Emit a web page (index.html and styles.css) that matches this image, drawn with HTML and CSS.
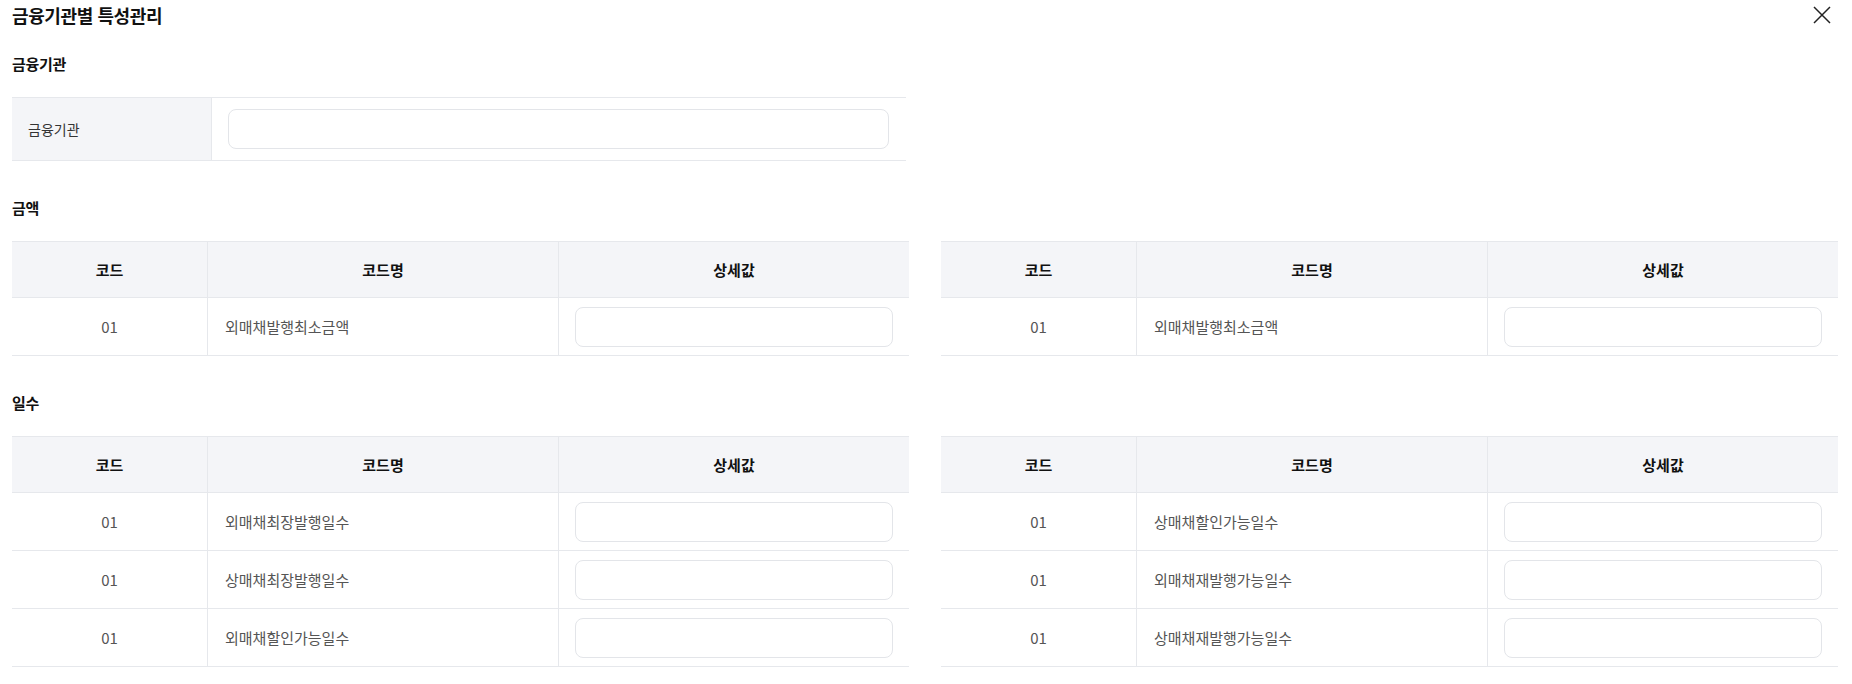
FILE: index.html
```html
<!DOCTYPE html>
<html lang="ko">
<head>
    <meta charset="UTF-8">
    <meta name="viewport" content="width=device-width, initial-scale=1.0">
    <title>금융기관별 특성관리</title>
    <link rel="stylesheet" href="styles.css">
</head>
<body>
    <div class="modal">
        <div class="modal-head">
            <h1>금융기관별 특성관리</h1>
            <button class="close-btn" type="button" aria-label="닫기">
                <svg viewBox="0 0 18 18">
                    <path d="M1 1L17 17M17 1L1 17"/>
                </svg>
            </button>
        </div>

        <!-- 금융기관 선택 -->
        <section class="group">
            <h2>금융기관</h2>
            <div class="pair">
                <div class="form-table">
                    <div class="form-row">
                        <div class="form-label">금융기관</div>
                        <div class="form-field"><input class="text-input" type="text"></div>
                    </div>
                </div>
            </div>
        </section>

        <!-- 금액 -->
        <section class="group">
            <h2>금액</h2>
            <div class="pair">
                <div class="grid-table">
                    <div class="grid-row grid-head">
                        <div class="cell">코드</div>
                        <div class="cell">코드명</div>
                        <div class="cell">상세값</div>
                    </div>
                    <div class="grid-row">
                        <div class="cell center">01</div>
                        <div class="cell name">외매채발행최소금액</div>
                        <div class="cell field"><input class="text-input" type="text"></div>
                    </div>
                </div>
                <div class="grid-table">
                    <div class="grid-row grid-head">
                        <div class="cell">코드</div>
                        <div class="cell">코드명</div>
                        <div class="cell">상세값</div>
                    </div>
                    <div class="grid-row">
                        <div class="cell center">01</div>
                        <div class="cell name">외매채발행최소금액</div>
                        <div class="cell field"><input class="text-input" type="text"></div>
                    </div>
                </div>
            </div>
        </section>

        <!-- 일수 -->
        <section class="group">
            <h2>일수</h2>
            <div class="pair">
                <div class="grid-table">
                    <div class="grid-row grid-head">
                        <div class="cell">코드</div>
                        <div class="cell">코드명</div>
                        <div class="cell">상세값</div>
                    </div>
                    <div class="grid-row">
                        <div class="cell center">01</div>
                        <div class="cell name">외매채최장발행일수</div>
                        <div class="cell field"><input class="text-input" type="text"></div>
                    </div>
                    <div class="grid-row">
                        <div class="cell center">01</div>
                        <div class="cell name">상매채최장발행일수</div>
                        <div class="cell field"><input class="text-input" type="text"></div>
                    </div>
                    <div class="grid-row">
                        <div class="cell center">01</div>
                        <div class="cell name">외매채할인가능일수</div>
                        <div class="cell field"><input class="text-input" type="text"></div>
                    </div>
                </div>
                <div class="grid-table">
                    <div class="grid-row grid-head">
                        <div class="cell">코드</div>
                        <div class="cell">코드명</div>
                        <div class="cell">상세값</div>
                    </div>
                    <div class="grid-row">
                        <div class="cell center">01</div>
                        <div class="cell name">상매채할인가능일수</div>
                        <div class="cell field"><input class="text-input" type="text"></div>
                    </div>
                    <div class="grid-row">
                        <div class="cell center">01</div>
                        <div class="cell name">외매채재발행가능일수</div>
                        <div class="cell field"><input class="text-input" type="text"></div>
                    </div>
                    <div class="grid-row">
                        <div class="cell center">01</div>
                        <div class="cell name">상매채재발행가능일수</div>
                        <div class="cell field"><input class="text-input" type="text"></div>
                    </div>
                </div>
            </div>
        </section>
    </div>
</body>
</html>
```

FILE: styles.css
```css
* {
    margin: 0;
    padding: 0;
    box-sizing: border-box;
}

body {
    font-family: "Noto Sans CJK KR", "Noto Sans", sans-serif;
    background: #fff;
    color: #111;
}

.modal {
    padding: 0 14px 0 12px;
}

.modal-head {
    height: 30px;
    display: flex;
    align-items: center;
    justify-content: space-between;
}

.modal-head h1 {
    font-size: 18px;
    font-weight: 700;
    line-height: 30px;
    letter-spacing: -0.4px;
    color: #111;
}

.close-btn {
    width: 18px;
    height: 18px;
    margin-right: 7px;
    border: none;
    background: none;
    cursor: pointer;
    display: flex;
}

.close-btn svg {
    width: 18px;
    height: 18px;
    stroke: #222;
    stroke-width: 1.5;
    fill: none;
}

.group {
    margin-top: 37px;
}

.group:first-of-type {
    margin-top: 24px;
}

.group h2 {
    font-size: 15px;
    font-weight: 700;
    line-height: 20px;
    letter-spacing: -0.3px;
    margin-bottom: 23px;
    color: #111;
}

.pair {
    display: grid;
    grid-template-columns: 1fr 1fr;
    gap: 32px;
}

/* 라벨 + 입력 한 줄 테이블 */
.form-table {
    border-top: 1px solid #e6e8ec;
    border-bottom: 1px solid #e6e8ec;
    margin-right: 3px;
}

.form-row {
    display: grid;
    grid-template-columns: 200px 1fr;
    height: 62px;
}

.form-label {
    background: #f4f5f8;
    border-right: 1px solid #e6e8ec;
    display: flex;
    align-items: center;
    padding-left: 16px;
    font-size: 14px;
    color: #333;
}

.form-field {
    display: flex;
    align-items: center;
    padding: 0 17px 0 16px;
}

/* 코드 / 코드명 / 상세값 테이블 */
.grid-table {
    border-top: 1px solid #e6e8ec;
}

.grid-row {
    display: grid;
    grid-template-columns: 195px 1fr 1fr;
    height: 58px;
    border-bottom: 1px solid #e6e8ec;
}

.grid-head {
    height: 56px;
    background: #f4f5f8;
}

.cell {
    display: flex;
    align-items: center;
    justify-content: center;
    font-size: 15px;
    color: #555;
}

.cell + .cell {
    border-left: 1px solid #e6e8ec;
}

.grid-head .cell {
    font-weight: 700;
    color: #111;
}

.cell.name {
    justify-content: flex-start;
    padding-left: 17px;
}

.cell.field {
    padding: 0 16px;
}

.text-input {
    width: 100%;
    height: 40px;
    border: 1px solid #e3e5e9;
    border-radius: 8px;
    background: #fff;
    padding: 0 12px;
    font-family: inherit;
    font-size: 14px;
    outline: none;
}

.text-input:focus {
    border-color: #9aa3b5;
}
```
